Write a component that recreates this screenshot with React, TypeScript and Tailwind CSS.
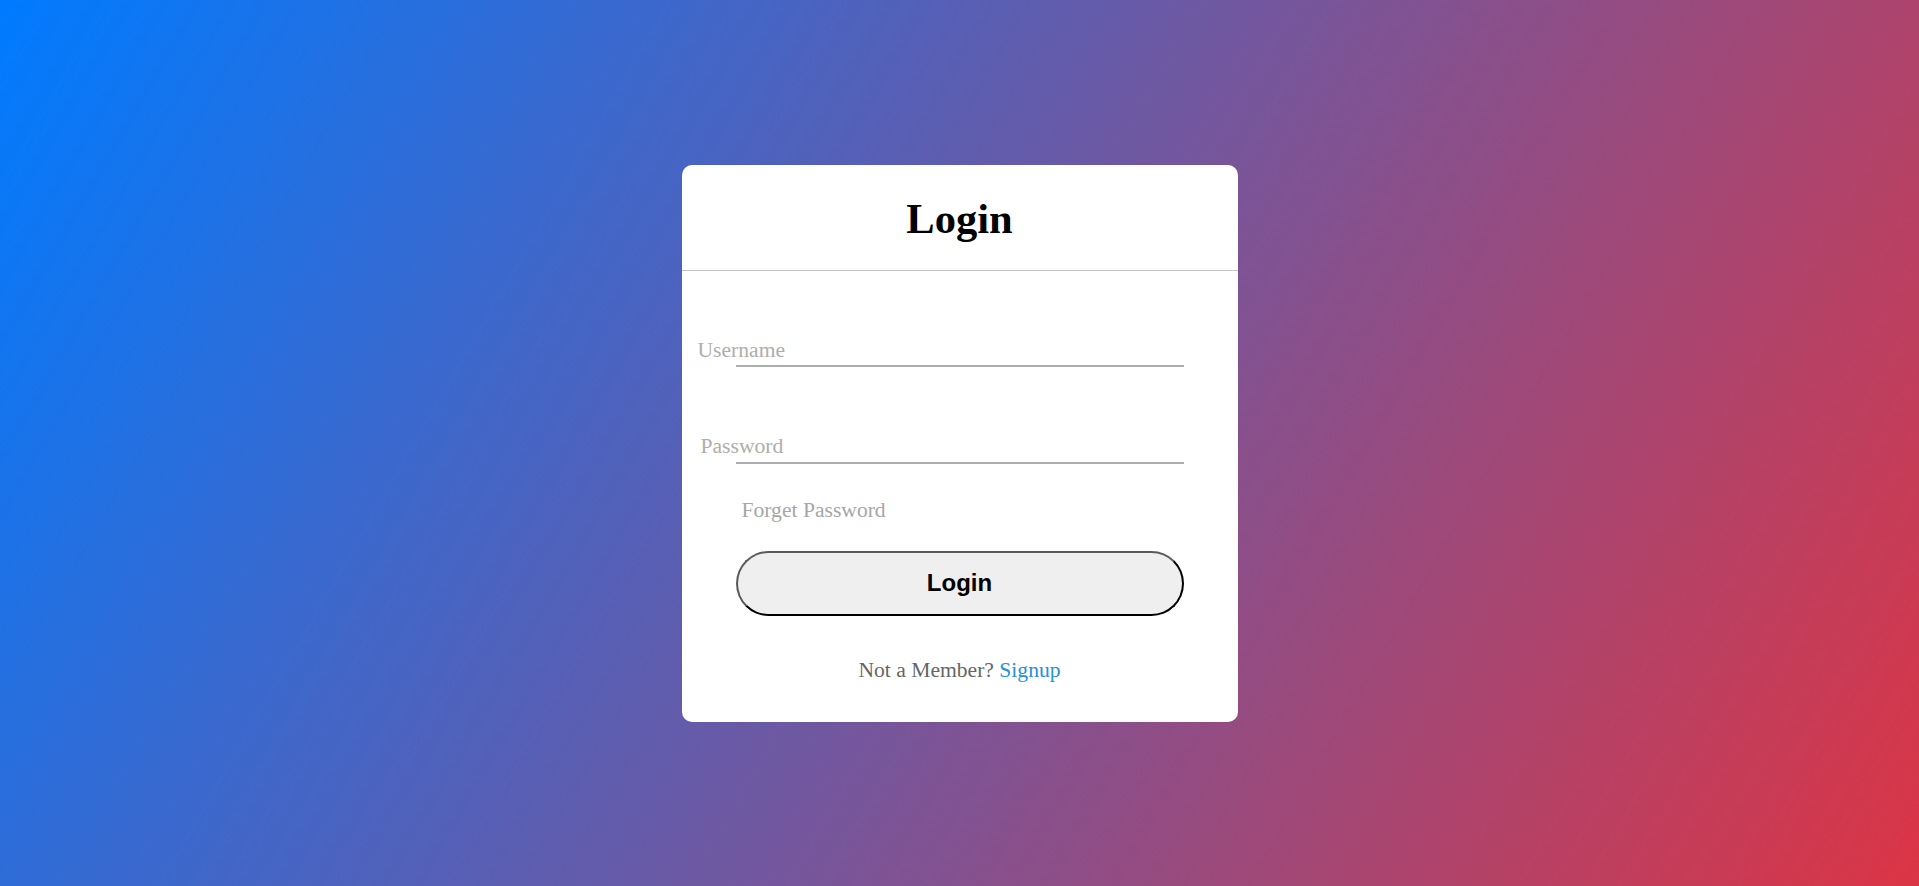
import React from "react";

const fields = [
  { name: "username", label: "Username", type: "text", labelClass: "left-[-38px] top-[11px]", gap: "mt-[56px]" },
  { name: "password", label: "Password", type: "password", labelClass: "left-[-35px] top-[10px]", gap: "mt-[57px]" },
];

export default function App() {
  return (
    <div className="min-h-screen w-full flex items-center justify-center bg-[linear-gradient(120deg,#007bff,#dc3545)] font-['Liberation_Serif','Times_New_Roman',serif]">
      <div className="w-[556px] bg-white rounded-[10px]">
        <div className="pt-[30px] pb-[28px] border-b border-[#c4c4c4] text-center">
          <h1 className="text-[42.5px] leading-[47px] font-bold text-black">Login</h1>
        </div>

        <form onSubmit={(e) => e.preventDefault()}>
          {fields.map((field) => (
            <div key={field.name} className={`relative mx-[54px] h-[40px] ${field.gap}`}>
              <input
                type={field.type}
                name={field.name}
                className="w-full h-full bg-transparent border-0 border-b-2 border-[#adadad] outline-none text-[21.6px]"
              />
              <label className={`absolute ${field.labelClass} text-[21.6px] leading-[24px] text-[#b0adab] pointer-events-none`}>
                {field.label}
              </label>
            </div>
          ))}

          <div className="mt-[34px] ml-[60px] text-[21.6px] leading-[24px] text-[#a6a6a6] cursor-pointer">
            Forget Password
          </div>

          <div className="mt-[29px] mx-[54px]">
            <button
              type="submit"
              className="w-full h-[65px] rounded-full bg-[#efefef] border-2 border-t-[#5a5a5a] border-l-[#5a5a5a] border-r-black border-b-black font-['Liberation_Sans',Arial,sans-serif] font-bold text-[24px] text-black"
            >
              Login
            </button>
          </div>

          <div className="mt-[42px] pb-[40px] text-center text-[21.6px] leading-[24px] text-[#666666]">
            Not a Member? <a href="#" className="text-[#2691d9]">Signup</a>
          </div>
        </form>
      </div>
    </div>
  );
}
